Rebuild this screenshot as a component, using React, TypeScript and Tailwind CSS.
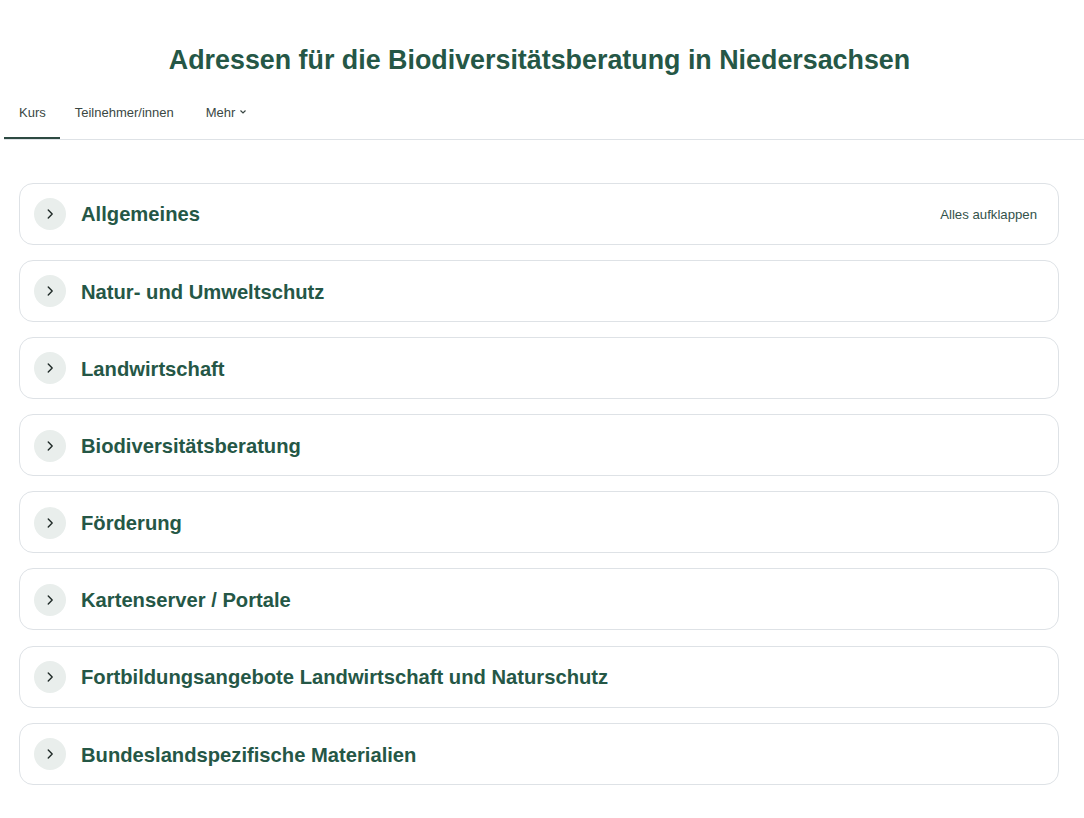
const sections = [
  "Allgemeines",
  "Natur- und Umweltschutz",
  "Landwirtschaft",
  "Biodiversitätsberatung",
  "Förderung",
  "Kartenserver / Portale",
  "Fortbildungsangebote Landwirtschaft und Naturschutz",
  "Bundeslandspezifische Materialien",
];

function Chevron() {
  return (
    <svg width="14" height="14" viewBox="0 0 16 16" fill="none" stroke="#1f2a27" strokeWidth="1.6" strokeLinecap="round" strokeLinejoin="round">
      <path d="M6 3.5 10.5 8 6 12.5" />
    </svg>
  );
}

export default function App() {
  return (
    <div className="min-h-[818px] bg-white font-['Liberation_Sans',Arial,sans-serif]">
      <h1 className="pt-[42px] pr-[5px] text-center text-[26.85px] font-bold leading-[36px] text-[#255746]">
        Adressen für die Biodiversitätsberatung in Niedersachsen
      </h1>
      <nav className="mt-[17px] ml-[4px] flex border-b border-[#dee2e6] text-[13px] text-[#3a4743]">
        <a className="border-b-2 border-[#2d4a42] pl-[15px] pr-[14px] pt-[8px] pb-[14px]">Kurs</a>
        <a className="px-[15px] pt-[8px] pb-[14px]">Teilnehmer/innen</a>
        <a className="flex items-start gap-1 pl-[17px] pr-[14px] pt-[8px] pb-[14px]">
          Mehr
          <svg className="mt-[5px]" width="8" height="8" viewBox="0 0 8 8" fill="none" stroke="#3a4743" strokeWidth="1.2">
            <path d="M1.5 2.5 4 5l2.5-2.5" />
          </svg>
        </a>
      </nav>
      <div className="flex flex-col gap-[15.2px] px-[19px] pt-[43px] pr-[25px]">
        {sections.map((s, i) => (
          <div key={s} className="flex h-[62px] items-center rounded-[14px] border border-[#dee2e6] pl-[14px] pr-[21px] pt-[2px]">
            <span className="-mt-[1px] flex h-[32px] w-[32px] items-center justify-center rounded-full bg-[#e9eeec]">
              <Chevron />
            </span>
            <span className="ml-[15px] text-[20.2px] font-bold text-[#255746]">{s}</span>
            {i === 0 && <span className="ml-auto text-[13.2px] text-[#33524a]">Alles aufklappen</span>}
          </div>
        ))}
      </div>
    </div>
  );
}
